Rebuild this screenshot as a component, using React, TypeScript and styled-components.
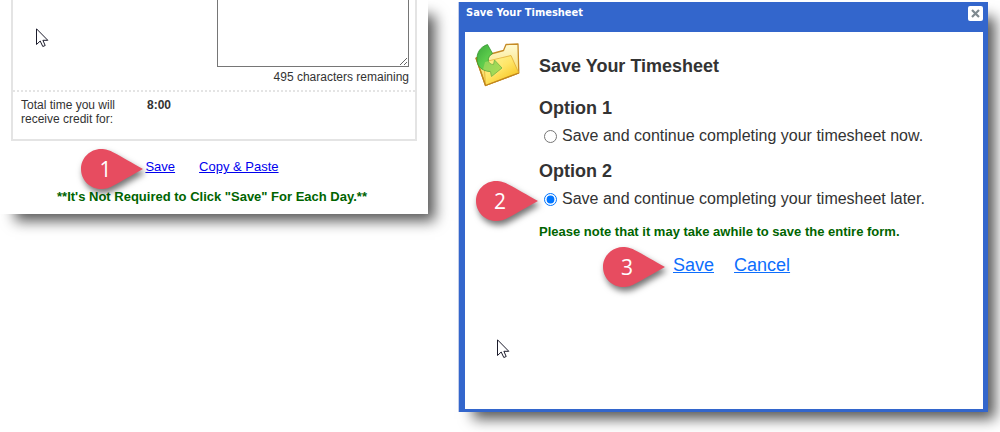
import React, { useState } from "react";
import styled, { createGlobalStyle } from "styled-components";

const GlobalStyle = createGlobalStyle`
  *, *::before, *::after { box-sizing: border-box; }
  body {
    margin: 0;
    background: #fff;
    color: #333;
    font-family: "Liberation Sans", Arial, sans-serif;
    font-size: 12px;
    line-height: 14px;
    overflow-x: hidden;
  }
  h1, h2, p { margin: 0; }
`;

const Page = styled.main`
  display: grid;
  grid-template-columns: minmax(0, 428fr) minmax(0, 530fr);
  column-gap: 30px;
  align-items: start;
  padding: 0 12px 20px 0;
`;

const Panel = styled.section`
  position: relative;
  background: #fff;
  box-shadow: 11px 11px 13px -4px rgba(0, 0, 0, 0.66);
`;

const EntryPanel = styled(Panel)`
  padding: 0 11px 9px;
`;

const EntryTable = styled.table`
  width: 100%;
  border: 2px solid #e4e4e4;
  border-top: 0;
  border-spacing: 0;
  table-layout: fixed;
`;

const LabelCell = styled.th`
  width: 128px;
  padding: 6px 8px 13px;
  text-align: left;
  vertical-align: top;
  font-weight: 400;
`;

const ValueCell = styled.td`
  padding: 6px;
  vertical-align: top;
  font-weight: 700;
`;

const NotesCell = styled.td`
  padding: 0 6px 6px;
  border-bottom: 2px dotted #e4e4e4;
  text-align: right;
`;

const Notes = styled.textarea`
  display: block;
  width: 192px;
  height: 67px;
  margin: 0 0 3px auto;
  border: 1px solid #767676;
  border-top: 0;
  resize: vertical;
`;

const EntryFooter = styled.div`
  padding-right: 4px;
`;

const EntryLinks = styled.nav`
  display: flex;
  justify-content: center;
  gap: 24px;
  padding-top: 18px;
  font-size: 13px;
  line-height: 16px;
`;

const EntryLink = styled.a`
  position: relative;
  color: #00e;
`;

const Notice = styled.p`
  color: #006400;
  font-size: 13px;
  font-weight: 700;
  line-height: 16px;
`;

const EntryNotice = styled(Notice)`
  padding-top: 14px;
  text-align: center;
`;

const DialogNotice = styled(Notice)`
  padding-top: 2px;
`;

const Dialog = styled(Panel)`
  margin-top: 2px;
  padding: 0 5px 3px 6px;
  border-left: 1px solid #c3cdea;
  background: #36c;
`;

const TitleBar = styled.header`
  display: flex;
  justify-content: space-between;
  align-items: flex-start;
  height: 30px;
  padding: 4px 0 0 1px;
  color: #fff;
`;

const DialogTitle = styled.h1`
  font-family: "DejaVu Sans Condensed", "DejaVu Sans", sans-serif;
  font-size: 11px;
  line-height: 14px;
`;

const CloseButton = styled.button`
  display: grid;
  place-items: center;
  width: 15px;
  height: 15px;
  padding: 0;
  border: 0;
  border-radius: 2px;
  background: #fff;
`;

const DialogBody = styled.form`
  display: grid;
  grid-template-columns: 46px minmax(0, 1fr);
  column-gap: 18px;
  align-items: start;
  min-height: 377px;
  padding: 10px;
  background: #fff;
`;

const Heading = styled.h2`
  font-size: 18px;
  line-height: 24px;
  padding: 12px 0 18px;
`;

const Option = styled.fieldset`
  margin: 0;
  padding: 0 0 13px;
  border: 0;
`;

const OptionTitle = styled.legend`
  padding: 0;
  font-size: 18px;
  font-weight: 700;
  line-height: 24px;
`;

const OptionLabel = styled.label`
  display: flex;
  align-items: center;
  gap: 5px;
  padding: 6px 0 0 5px;
  font-size: 16px;
  line-height: 20px;
`;

const RadioSlot = styled.span`
  position: relative;
  display: flex;
`;

const Radio = styled.input`
  width: 13px;
  height: 13px;
  margin: 0;
`;

const DialogLinks = styled.nav`
  display: flex;
  gap: 20px;
  padding: 14px 0 0 134px;
  font-size: 18px;
  line-height: 22px;
`;

const DialogLink = styled.a`
  position: relative;
  color: #0d6efd;
`;

const PinBox = styled.span<{ $gap: number }>`
  position: absolute;
  right: 100%;
  top: 50%;
  width: 62px;
  height: 40px;
  margin: -18px ${(p) => p.$gap}px 0 0;
  z-index: 1;
`;

const PinShape = styled.svg`
  display: block;
  overflow: visible;
  filter: drop-shadow(2px 4px 3px rgba(0, 0, 0, 0.55));
`;

const PinNumber = styled.span`
  position: absolute;
  left: 0;
  top: 0;
  width: 48px;
  color: #fff;
  font-family: "Open Sans", sans-serif;
  font-size: 21px;
  line-height: 40px;
  text-align: center;
`;

const Pointer = styled.svg<{ $left: number; $top: number }>`
  position: absolute;
  left: ${(p) => p.$left}px;
  top: ${(p) => p.$top}px;
`;

function Pin({ n, gap }: { n: number; gap: number }) {
  return (
    <PinBox $gap={gap}>
      <PinShape width="62" height="40" viewBox="0 0 62 40" aria-hidden="true">
        <path
          d="M62 20C51 26 41 32 33.500 36C28 39 25 40 20 40C9 40 0 31 0 20S9 0 20 0C25 0 28 1 33.500 4C41 8 51 14 62 20Z"
          fill="#e74c60"
        />
      </PinShape>
      <PinNumber>{n}</PinNumber>
    </PinBox>
  );
}

function MousePointer({ left, top }: { left: number; top: number }) {
  return (
    <Pointer $left={left} $top={top} width="13" height="20" viewBox="0 0 13 20" aria-hidden="true">
      <path
        d="M.5 .8V16.500L4.200 13L6.800 18.500L9.200 17.500L6.900 12.300H11.800Z"
        fill="#fff"
        stroke="#1b1b2b"
      />
    </Pointer>
  );
}

function FolderIcon() {
  return (
    <svg width="46" height="46" viewBox="0 0 46 46" aria-hidden="true">
      <defs>
        <linearGradient id="back" x1="0" y1="0" x2="0" y2="1">
          <stop offset="0" stopColor="#fffbd6" />
          <stop offset="1" stopColor="#f6d345" />
        </linearGradient>
        <linearGradient id="front" x1="0" y1="0" x2="0.8" y2="1">
          <stop offset="0" stopColor="#fdf3a0" />
          <stop offset="0.5" stopColor="#ffe566" />
          <stop offset="1" stopColor="#f5be14" />
        </linearGradient>
        <linearGradient id="arrow" x1="0" y1="0" x2="1" y2="1">
          <stop offset="0" stopColor="#3aa83a" />
          <stop offset="0.4" stopColor="#5ccb4c" />
          <stop offset="1" stopColor="#8fd444" />
        </linearGradient>
      </defs>
      <path d="M1 16L28.500 8.500L31 2.500L43 2L43.800 31L10.500 43.500Z" fill="url(#back)" stroke="#c58a25" strokeWidth="1.300" strokeLinejoin="round" />
      <path d="M9 20L36 13.500L43.800 31L10.500 43.500Z" fill="url(#front)" stroke="#e0ac35" strokeWidth="0.800" strokeLinejoin="round" />
      <path d="M1 16L10.500 43.500L43.800 31" fill="none" stroke="#c0851c" strokeWidth="1.300" strokeLinejoin="round" />
      <path d="M12.500 2.500C5 5 1.500 11 2 18C2.500 25 7 29 15.500 29.500L16.500 34.500L27 26L19.500 18L18.500 22.500C12 22.500 11.500 15 17.500 11.500Z" fill="url(#arrow)" stroke="#36952e" strokeWidth="0.800" strokeLinejoin="round" />
      <path d="M10 20L28 15.500V27L16 36L15 29.500C12 29.500 10 28.500 8 27.500Z" fill="#fff07a" opacity="0.300" />
    </svg>
  );
}

export default function App() {
  const [choice, setChoice] = useState("later");
  return (
    <>
      <GlobalStyle />
      <Page>
        <EntryPanel>
          <EntryTable>
            <colgroup>
              <col width="128" />
              <col />
            </colgroup>
            <tbody>
              <tr>
                <NotesCell colSpan={2}>
                  <Notes id="notes" aria-label="Notes" aria-describedby="remaining" />
                  <span id="remaining">495 characters remaining</span>
                </NotesCell>
              </tr>
              <tr>
                <LabelCell scope="row">Total time you will receive credit for:</LabelCell>
                <ValueCell>8:00</ValueCell>
              </tr>
            </tbody>
          </EntryTable>
          <EntryFooter>
            <EntryLinks>
              <EntryLink href="#save">
                Save
                <Pin n={1} gap={2} />
              </EntryLink>
              <EntryLink href="#copy">Copy &amp; Paste</EntryLink>
            </EntryLinks>
            <EntryNotice>**It's Not Required to Click "Save" For Each Day.**</EntryNotice>
          </EntryFooter>
          <MousePointer left={36} top={28} />
        </EntryPanel>

        <Dialog role="dialog" aria-labelledby="dialog-title">
          <TitleBar>
            <DialogTitle id="dialog-title">Save Your Timesheet</DialogTitle>
            <CloseButton type="button" aria-label="Close">
              <svg width="9" height="9" viewBox="0 0 9 9" aria-hidden="true">
                <path d="M1 1L8 8M8 1L1 8" stroke="#7f8a90" strokeWidth="2.200" />
              </svg>
            </CloseButton>
          </TitleBar>
          <DialogBody>
            <FolderIcon />
            <div>
              <Heading>Save Your Timesheet</Heading>
              <Option>
                <OptionTitle>Option 1</OptionTitle>
                <OptionLabel>
                  <RadioSlot>
                    <Radio type="radio" name="when" checked={choice === "now"} onChange={() => setChoice("now")} />
                  </RadioSlot>
                  Save and continue completing your timesheet now.
                </OptionLabel>
              </Option>
              <Option>
                <OptionTitle>Option 2</OptionTitle>
                <OptionLabel>
                  <RadioSlot>
                    <Radio type="radio" name="when" checked={choice === "later"} onChange={() => setChoice("later")} />
                    <Pin n={2} gap={6} />
                  </RadioSlot>
                  Save and continue completing your timesheet later.
                </OptionLabel>
              </Option>
              <DialogNotice>Please note that it may take awhile to save the entire form.</DialogNotice>
              <DialogLinks>
                <DialogLink href="#save-timesheet">
                  Save
                  <Pin n={3} gap={8} />
                </DialogLink>
                <DialogLink href="#cancel">Cancel</DialogLink>
              </DialogLinks>
            </div>
          </DialogBody>
          <MousePointer left={38} top={337} />
        </Dialog>
      </Page>
    </>
  );
}
